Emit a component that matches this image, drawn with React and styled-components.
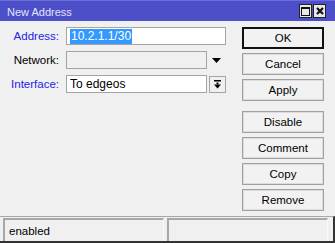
import React from 'react';
import styled, { createGlobalStyle } from 'styled-components';

const GlobalStyle = createGlobalStyle`
  html, body {
    margin: 0;
    padding: 0;
    background: #f0f0f0;
  }
  body {
    font-family: "Liberation Sans", Arial, sans-serif;
    font-size: 11px;
    color: #000;
  }
`;

const Window = styled.div`
  width: 335px;
  height: 243px;
  display: flex;
  flex-direction: column;
  background: #f0f0f0;
  box-sizing: border-box;
  border-bottom: 2px solid #333;
  overflow: hidden;
`;

const TitleBar = styled.div`
  height: 21px;
  flex-shrink: 0;
  background: #4c4fc8;
  border-top: 1px solid #6a6dd8;
  box-sizing: border-box;
  display: flex;
  align-items: center;
  padding: 0 9px 0 7px;
`;

const Title = styled.div`
  flex: 1;
  color: #e4e4ff;
  font-size: 11px;
  padding-top: 1px;
`;

const TitleButtons = styled.div`
  display: flex;
  gap: 1px;
`;

const TitleButton = styled.div`
  width: 13px;
  height: 14px;
  background: #e8e8e8;
  border: 1px solid #222;
  box-sizing: border-box;
  display: flex;
  align-items: center;
  justify-content: center;
`;

const Body = styled.div`
  flex: 1;
  display: flex;
  padding: 6px 11px 0 0;
`;

const Form = styled.div`
  flex: 1;
  display: flex;
  flex-direction: column;
  gap: 6px;
`;

const Row = styled.div`
  display: flex;
  align-items: center;
  height: 18px;
`;

const Label = styled.div`
  width: 59px;
  margin-right: 7px;
  text-align: right;
  font-size: 11.5px;
  color: ${({ $active }) => ($active ? '#2424e6' : '#000')};
`;

const Field = styled.div`
  width: ${({ $w }) => $w}px;
  height: 18px;
  box-sizing: border-box;
  border: 1px solid #a4a4a4;
  background: ${({ $disabled }) => ($disabled ? '#f0f0f0' : '#fff')};
  display: flex;
  align-items: center;
  padding-left: 3px;
  font-size: 12px;
  white-space: nowrap;
`;

const Selected = styled.span`
  background: #3399ff;
  color: #fff;
  line-height: 15px;
  padding: 0 1px;
`;

const ArrowSlot = styled.div`
  width: 19px;
  display: flex;
  justify-content: center;
`;

const DropButton = styled.div`
  width: 17px;
  height: 17px;
  margin-left: 2px;
  box-sizing: border-box;
  border: 1px solid #a4a4a4;
  background: #f0f0f0;
  display: flex;
  align-items: center;
  justify-content: center;
`;

const Buttons = styled.div`
  width: 82px;
  display: flex;
  flex-direction: column;
  gap: 4px;
`;

const Button = styled.div`
  height: 22px;
  box-sizing: border-box;
  border: ${({ $default }) => ($default ? '2px solid #111' : '1px solid #a0a0a0')};
  box-shadow: ${({ $default }) => ($default ? 'none' : 'inset 0 0 0 1px #dcdcdc')};
  background: #f2f2f2;
  display: flex;
  align-items: center;
  justify-content: center;
  font-size: 11.5px;
  margin-top: ${({ $space }) => ($space ? '6px' : '0')};
`;

const StatusBar = styled.div`
  height: 23px;
  flex-shrink: 0;
  display: flex;
  gap: 3px;
  padding: 1px 5px 0 3px;
  border-top: 1px solid #a8a8a8;
  border-right: 2px solid #333;
`;

const StatusPanel = styled.div`
  flex: 1;
  box-sizing: border-box;
  border-top: 2px solid #a8a8a8;
  border-left: 2px solid #a8a8a8;
  border-right: 1px solid #fafafa;
  display: flex;
  align-items: center;
  padding-left: 4px;
  font-size: 11.5px;
`;

const MaxIcon = () => (
  <svg width="9" height="9" viewBox="0 0 9 9">
    <rect x="0.5" y="0.5" width="8" height="8" fill="none" stroke="#111" />
    <rect x="0" y="0" width="9" height="2" fill="#111" />
  </svg>
);

const CloseIcon = () => (
  <svg width="8" height="8" viewBox="0 0 8 8">
    <path d="M1 1 L7 7 M7 1 L1 7" stroke="#111" strokeWidth="2.2" />
  </svg>
);

const DownArrow = () => (
  <svg width="9" height="5" viewBox="0 0 9 5">
    <polygon points="0,0 9,0 4.5,5" fill="#000" />
  </svg>
);

const DropIcon = () => (
  <svg width="7" height="9" viewBox="0 0 7 9">
    <rect x="0" y="0" width="7" height="1.5" fill="#000" />
    <rect x="2.5" y="2.5" width="2" height="2" fill="#000" />
    <polygon points="0,4.5 7,4.5 3.5,8.5" fill="#000" />
  </svg>
);

const actions = ['Cancel', 'Apply'];
const extra = ['Disable', 'Comment', 'Copy', 'Remove'];

export default function App() {
  return (
    <>
      <GlobalStyle />
      <Window>
        <TitleBar>
          <Title>New Address</Title>
          <TitleButtons>
            <TitleButton><MaxIcon /></TitleButton>
            <TitleButton><CloseIcon /></TitleButton>
          </TitleButtons>
        </TitleBar>

        <Body>
          <Form>
            <Row>
              <Label $active>Address:</Label>
              <Field $w={160}><Selected>10.2.1.1/30</Selected></Field>
            </Row>
            <Row>
              <Label>Network:</Label>
              <Field $w={141} $disabled />
              <ArrowSlot><DownArrow /></ArrowSlot>
            </Row>
            <Row>
              <Label $active>Interface:</Label>
              <Field $w={141}>To edgeos</Field>
              <DropButton><DropIcon /></DropButton>
            </Row>
          </Form>

          <Buttons>
            <Button $default>OK</Button>
            {actions.map((a) => <Button key={a}>{a}</Button>)}
            {extra.map((a, i) => <Button key={a} $space={i === 0}>{a}</Button>)}
          </Buttons>
        </Body>

        <StatusBar>
          <StatusPanel>enabled</StatusPanel>
          <StatusPanel />
        </StatusBar>
      </Window>
    </>
  );
}
